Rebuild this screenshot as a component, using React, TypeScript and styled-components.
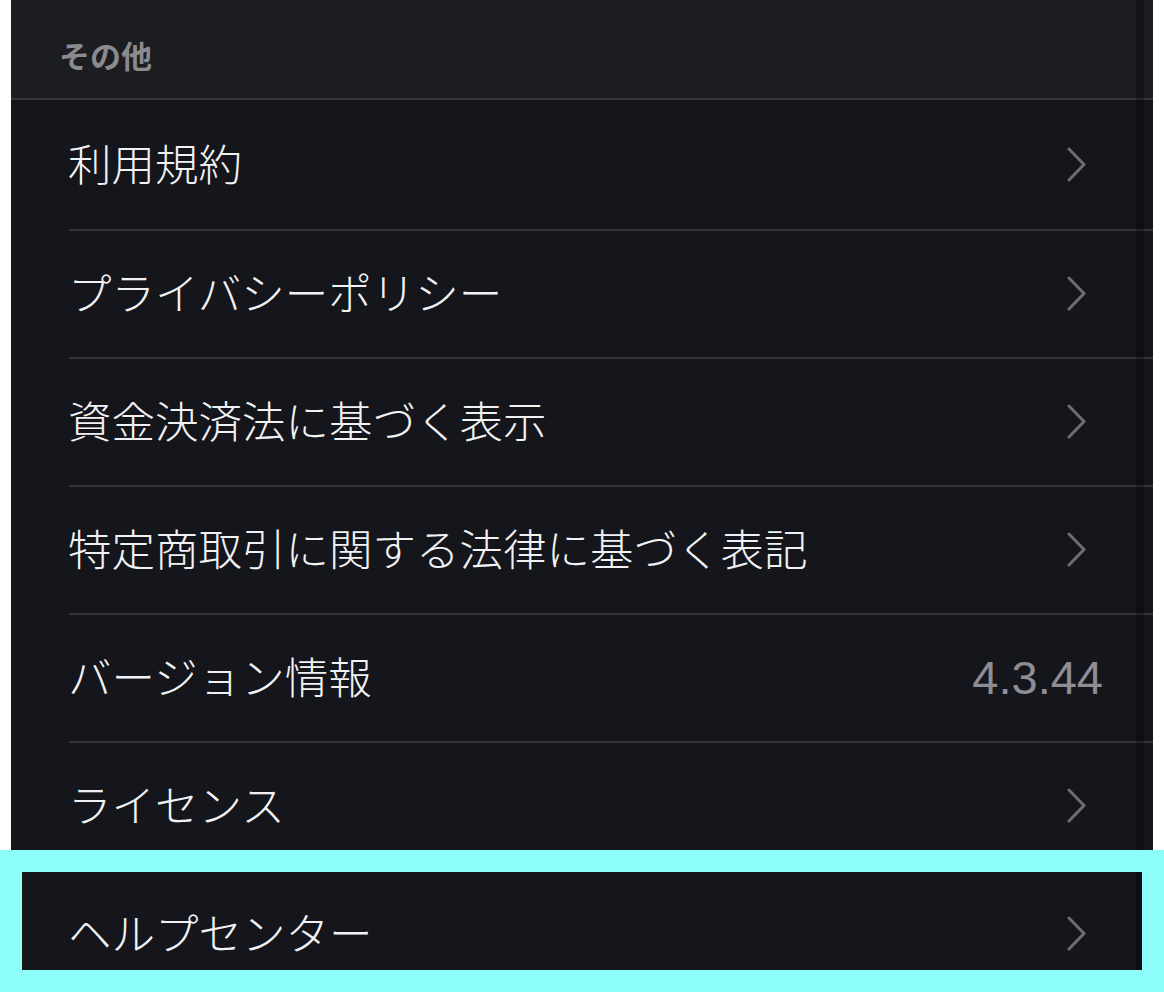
import React from "react";
import styled, { createGlobalStyle } from "styled-components";

const Global = createGlobalStyle`
  html, body {
    margin: 0;
    padding: 0;
    background: #ffffff;
    height: 992px;
    overflow: hidden;
  }
  body {
    font-family: "Noto Sans CJK JP", "Noto Sans", sans-serif;
  }
`;

const Page = styled.div`
  position: relative;
  width: 1164px;
  height: 992px;
  overflow: hidden;
  background: #ffffff;
`;

const Panel = styled.div`
  position: relative;
  margin-left: 11px;
  width: 1142px;
  display: flex;
  flex-direction: column;
  background: #14161c;
`;

const SectionHeader = styled.div`
  box-sizing: border-box;
  height: 100px;
  border-bottom: 2px solid #36373b;
  background: #1c1d21;
  display: flex;
  align-items: center;
  padding-left: 48px;
  padding-top: 10px;
  color: #8a8a8f;
  font-size: 31px;
  font-weight: 600;
`;

const Row = styled.div<{ $first?: boolean }>`
  position: relative;
  height: ${(p) => (p.$first ? 129 : 128)}px;
  box-sizing: border-box;
  padding-top: ${(p) => (p.$first ? 0 : 2)}px;
  padding-bottom: 5px;
  display: flex;
  align-items: center;
  padding-left: 57px;
  padding-right: 50px;
  flex-shrink: 0;
  &::before {
    content: "";
    display: ${(p) => (p.$first ? "none" : "block")};
    position: absolute;
    top: 0;
    left: 58px;
    right: 0;
    height: 2px;
    background: #36373b;
  }
`;

const Label = styled.span`
  flex: 1;
  color: #f2f2f4;
  font-size: 43.5px;
  font-weight: 300;
  white-space: nowrap;
`;

const Value = styled.span`
  color: #8d8d92;
  font-family: "Liberation Sans", Arial, sans-serif;
  font-size: 47px;
  font-weight: 400;
  margin-top: 4px;
`;

const ChevronWrap = styled.span`
  display: flex;
  margin-right: 17px;
  margin-top: 4px;
`;

const ScrollTrack = styled.div`
  position: absolute;
  top: 0;
  bottom: 0;
  right: 9px;
  width: 8px;
  background: rgba(0, 0, 0, 0.28);
  pointer-events: none;
`;

const Highlight = styled.div`
  position: absolute;
  left: 0;
  top: 850px;
  width: 1164px;
  height: 142px;
  box-sizing: border-box;
  border: 22px solid #8cfdf8;
  pointer-events: none;
`;

const Chevron = () => (
  <ChevronWrap>
    <svg width="19" height="35" viewBox="0 0 19 35" fill="none">
      <path
        d="M2 2 L17 17.5 L2 33"
        stroke="#6d6d72"
        strokeWidth="3"
        strokeLinecap="round"
        strokeLinejoin="round"
      />
    </svg>
  </ChevronWrap>
);

type Item = { label: string; value?: string };

const items: Item[] = [
  { label: "利用規約" },
  { label: "プライバシーポリシー" },
  { label: "資金決済法に基づく表示" },
  { label: "特定商取引に関する法律に基づく表記" },
  { label: "バージョン情報", value: "4.3.44" },
  { label: "ライセンス" },
  { label: "ヘルプセンター" },
];

export default function App() {
  return (
    <Page>
      <Global />
      <Panel>
        <SectionHeader>その他</SectionHeader>
        {items.map((it, i) => (
          <Row key={it.label} $first={i === 0}>
            <Label>{it.label}</Label>
            {it.value ? <Value>{it.value}</Value> : <Chevron />}
          </Row>
        ))}
        <ScrollTrack />
      </Panel>
      <Highlight />
    </Page>
  );
}
